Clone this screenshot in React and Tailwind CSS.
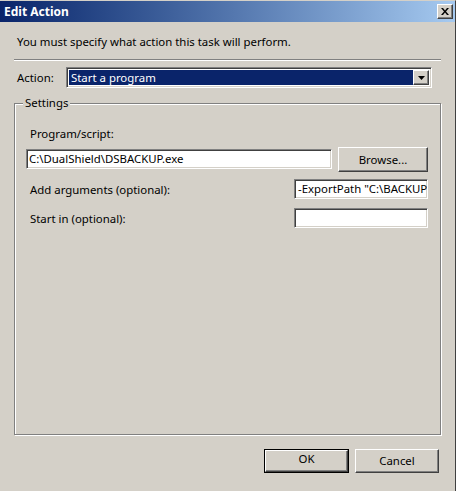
const sunken =
  "border border-t-[#808080] border-l-[#808080] border-b-white border-r-white shadow-[inset_1px_1px_0_#404040,inset_-1px_-1px_0_#d4d0c8]";
const raised =
  "border border-t-white border-l-white border-b-[#404040] border-r-[#404040] shadow-[inset_-1px_-1px_0_#808080]";

const FieldRow = ({ label, value }) => (
  <div className="flex items-start justify-between">
    <span className="mt-[3px] pl-[4px]">{label}</span>
    <div className={`h-[20px] w-[134px] overflow-hidden whitespace-nowrap bg-white pl-[3px] leading-[18px] ${sunken}`}>{value}</div>
  </div>
);

const App = () => {
  return (
    <div
      className="flex h-[491px] w-[456px] flex-col border-t border-r border-t-[#d4d0c8] border-r-[#404040] bg-[#d4d0c8] text-[11.4px] leading-[16px] text-black"
      style={{ fontFamily: '"Noto Sans", "Liberation Sans", sans-serif' }}
    >
      <div className="flex h-[21px] items-center justify-between bg-gradient-to-r from-[#0a246a] to-[#a6caf0] pl-[4px] pr-[2px]">
        <span className="text-[12px] font-bold text-white">Edit Action</span>
        <button type="button" className={`flex h-[15px] w-[16px] items-center justify-center bg-[#d4d0c8] ${raised}`}>
          <svg width="8" height="7" viewBox="0 0 8 7">
            <path d="M0 0h2l2 2.5L6 0h2L5 3.5 8 7H6L4 4.5 2 7H0l3-3.5z" fill="#000" />
          </svg>
        </button>
      </div>

      <p className="mt-[12px] pl-[17px]">You must specify what action this task will perform.</p>
      <div className="ml-[14px] mt-[9px] h-[2px] w-[427px] border-t border-b border-t-[#808080] border-b-white" />

      <div className="mt-[6px] flex items-center pl-[17px]">
        <span className="w-[49px]">Action:</span>
        <div className={`flex h-[21px] w-[366px] items-center bg-white p-[2px] ${sunken}`}>
          <div className="flex h-full flex-1 items-center bg-[#0a246a] pl-[2px] text-white">Start a program</div>
          <div className={`flex h-full w-[16px] items-center justify-center bg-[#d4d0c8] ${raised}`}>
            <svg width="7" height="4" viewBox="0 0 7 4">
              <path d="M0 0h7L3.5 4z" fill="#000" />
            </svg>
          </div>
        </div>
      </div>

      <fieldset className="ml-[14px] mt-[7px] h-[340px] w-[427px] border border-[#808080] px-[8px] shadow-[inset_1px_1px_0_white,1px_1px_0_white]">
        <legend className="bg-[#d4d0c8] px-[2px]">Settings</legend>
        <div className="flex flex-col pl-[3px] pr-[4px]">
          <span className="mt-[15px] pl-[4px]">Program/script:</span>
          <div className="mt-[5px] flex items-start justify-between">
            <div className={`mt-[2px] h-[20px] w-[306px] bg-white pl-[2px] leading-[18px] ${sunken}`}>C:\DualShield\DSBACKUP.exe</div>
            <button type="button" className={`h-[25px] w-[90px] bg-[#d4d0c8] ${raised}`}>Browse...</button>
          </div>
          <div className="mt-[7px] flex flex-col gap-[9px]">
            <FieldRow label="Add arguments (optional):" value={'-ExportPath "C:\\BACKUP'} />
            <FieldRow label="Start in (optional):" value="" />
          </div>
        </div>
      </fieldset>

      <div className="mt-[14px] flex justify-end gap-[6px] pr-[16px]">
        <button type="button" className="h-[24px] w-[85px] border border-black bg-[#d4d0c8]">
          <div className={`h-full w-full ${raised}`}>OK</div>
        </button>
        <button type="button" className={`h-[24px] w-[84px] bg-[#d4d0c8] ${raised}`}>Cancel</button>
      </div>
    </div>
  );
};

export default App;
